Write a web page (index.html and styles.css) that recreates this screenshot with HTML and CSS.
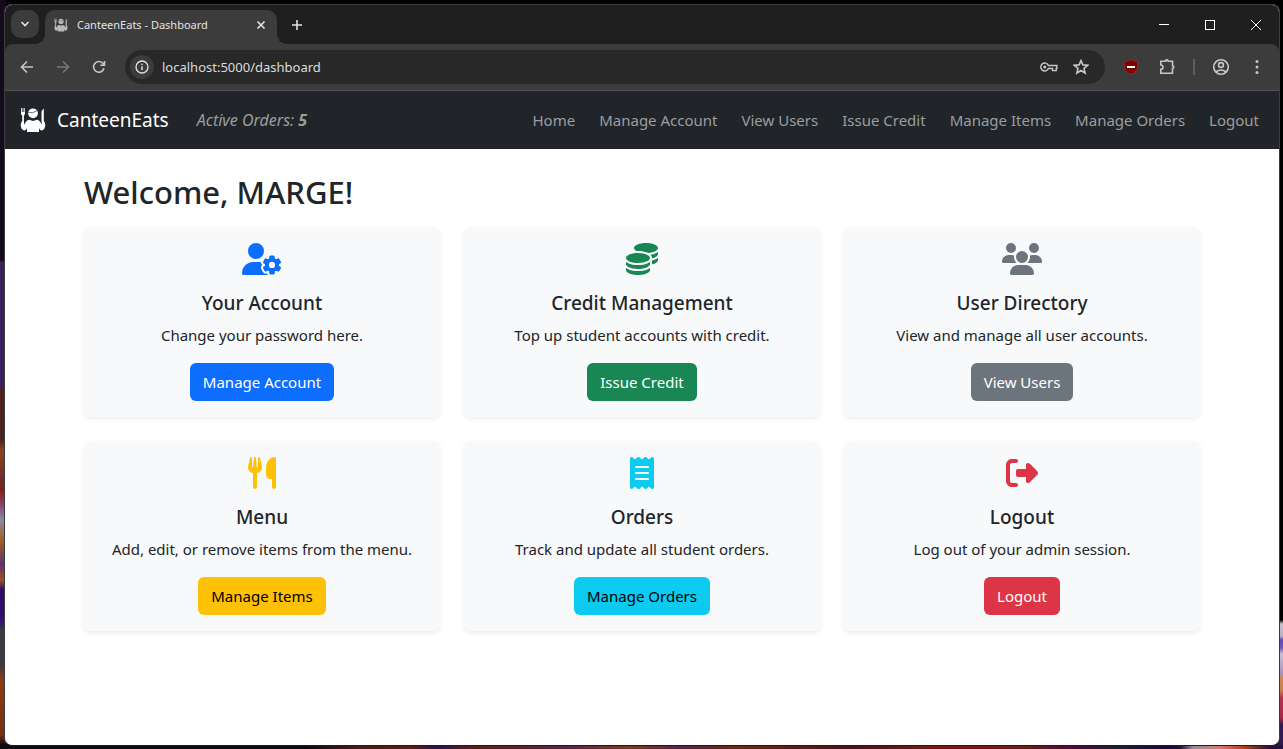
FILE: index.html
```html
<!DOCTYPE html>
<html lang="en">
<head>
<meta charset="utf-8">
<title>CanteenEats - Dashboard</title>
<link rel="stylesheet" href="styles.css">
</head>
<body>
<svg class="defs" width="0" height="0" aria-hidden="true">
  <symbol id="diner" viewBox="0 0 26 26">
    <path d="M1 1v5.500q0 1.500 1.200 1.900V14q-1.400 1.500-1.500 4Q1 22.500 4 23.500q2 0 3-2.200V25h12v-3.700q1 2.200 3 2.200 3-1 3.300-5.500-.1-2.500-1.500-4V1.500Q21.500 3 21.500 6.500V14l.3 4q-1.500-4.500-4.800-5.200l-4 1.200-4-1.200q-3.300.7-4.800 5.200l-.3-4V8.400Q5 8 5 6.500V1h-.7v4h-.9V1h-.8v4h-.8V1z"/>
    <circle cx="13" cy="6.300" r="4.900"/>
    <path d="M8 5.300q5 1.600 9.500-1.800" fill="none" stroke="#555" stroke-width=".8"/>
  </symbol>
</svg>

<div class="window">
  <header class="chrome">
    <div class="tabstrip">
      <button class="tab-search" aria-label="Search tabs"><svg width="10" height="10" viewBox="0 0 10 10"><path class="line thick" d="M1.500 3 5 6.500 8.500 3"/></svg></button>
      <div class="tab">
        <svg class="favicon" width="14" height="14"><use href="#diner"/></svg>
        <span class="tab-title">CanteenEats - Dashboard</span>
        <button class="icon-btn" aria-label="Close tab"><svg width="10" height="10" viewBox="0 0 10 10"><path class="line thick" d="m1.500 1.500 7 7m0-7-7 7"/></svg></button>
      </div>
      <button class="icon-btn new-tab" aria-label="New tab"><svg width="12" height="12" viewBox="0 0 12 12"><path class="line thick" d="M6 1v10M1 6h10"/></svg></button>
      <div class="controls">
        <button class="icon-btn" aria-label="Minimize"><svg width="12" height="12" viewBox="0 0 12 12"><path class="line" d="M1 5.500h10"/></svg></button>
        <button class="icon-btn" aria-label="Maximize"><svg width="12" height="12" viewBox="0 0 12 12"><rect class="line" x="1.500" y="1.500" width="9" height="9"/></svg></button>
        <button class="icon-btn" aria-label="Close"><svg width="12" height="12" viewBox="0 0 12 12"><path class="line" d="m1 1 10 10m0-10L1 11"/></svg></button>
      </div>
    </div>
    <div class="toolbar">
      <button class="icon-btn" aria-label="Back"><svg width="14" height="14" viewBox="0 0 14 14"><path class="line thick" d="M13 7H1.500M7 1.500 1.500 7 7 12.500"/></svg></button>
      <button class="icon-btn off" aria-label="Forward" disabled><svg width="14" height="14" viewBox="0 0 14 14"><path class="line thick" d="M1 7h11.500M7 1.500 12.500 7 7 12.500"/></svg></button>
      <button class="icon-btn" aria-label="Reload"><svg width="14" height="14" viewBox="0 0 14 14"><path class="line thick" d="M12 8.200A5.300 5.300 0 1 1 10.800 3.300L12.300 5M12.500 1v4.300H8.300"/></svg></button>
      <div class="address">
        <button class="site-info" aria-label="Site information"><svg width="14" height="14" viewBox="0 0 14 14"><circle class="line" stroke-width="1.300" cx="7" cy="7" r="6"/><path class="line" stroke-width="1.400" d="M7 6.300V10M7 3.700v1.400"/></svg></button>
        <input type="text" value="localhost:5000/dashboard" aria-label="Address">
        <button class="icon-btn" aria-label="Passwords"><svg width="18" height="12" viewBox="0 0 20 12"><path class="line thick" d="M9.300 4.300A4.400 4.400 0 1 0 9.300 7.700H12.500V7.700H14V10h4V7.700h.8V4.300z"/><circle class="solid" cx="5.300" cy="6" r="1.700"/></svg></button>
        <button class="icon-btn" aria-label="Bookmark"><svg width="16" height="16" viewBox="0 0 16 16"><path class="line thick" d="m8 1.600 1.900 4.300 4.700.4L11 9.400l1.100 4.600L8 11.500 3.900 14 5 9.400 1.400 6.300l4.700-.4z"/></svg></button>
      </div>
      <div class="extensions">
        <button class="icon-btn" aria-label="Ad blocker"><svg width="16" height="16" viewBox="0 0 16 16"><path fill="#800000" stroke="#a33" stroke-width=".6" d="M8 .8Q11 2.300 14.500 2.500V8q0 4.600-6.500 7.300Q1.500 12.600 1.500 8V2.500Q5 2.300 8 .8z"/><path fill="#fff" d="M4 7h8v2H4z"/></svg></button>
        <button class="icon-btn" aria-label="Extensions"><svg width="18" height="18" viewBox="0 0 18 18"><path class="line thick" d="M2.800 3.200H7.500a1.300 1.300 0 0 1 2.600 0h4.400v4.600a1.300 1.300 0 0 1 0 2.600v4.800H2.800v-3.800a2.200 2.200 0 0 0 0-4.400z"/></svg></button>
        <span class="divider"></span>
        <button class="icon-btn" aria-label="Profile"><svg width="18" height="18" viewBox="0 0 18 18"><circle class="line thick" cx="9" cy="9" r="7.300"/><circle class="line thick" cx="9" cy="7" r="2.400"/><path class="line thick" d="M3.800 14q5.200-4 10.400 0"/></svg></button>
        <button class="icon-btn" aria-label="Menu"><svg width="16" height="16" viewBox="0 0 16 16"><g class="solid"><circle cx="8" cy="2.500" r="1.500"/><circle cx="8" cy="8" r="1.500"/><circle cx="8" cy="13.500" r="1.500"/></g></svg></button>
      </div>
    </div>
  </header>

  <nav class="navbar">
    <a class="brand" href="#"><svg width="26" height="26"><use href="#diner"/></svg>CanteenEats</a>
    <em class="active-orders">Active Orders: <strong>5</strong></em>
    <div class="links">
      <a href="#">Home</a>
      <a href="#">Manage Account</a>
      <a href="#">View Users</a>
      <a href="#">Issue Credit</a>
      <a href="#">Manage Items</a>
      <a href="#">Manage Orders</a>
      <a href="#">Logout</a>
    </div>
  </nav>

  <main class="container">
    <h1>Welcome, MARGE!</h1>
    <div class="cards">
      <section class="card primary">
        <svg class="card-icon" viewBox="0 0 640 512"><path d="M224 0a128 128 0 1 1 0 256A128 128 0 1 1 224 0zM178.300 304h91.400c11.800 0 23.400 1.200 34.500 3.300c-2.100 18.500 7.400 35.600 21.800 44.800c-16.600 10.600-26.700 31.600-20 53.300c4 12.900 9.400 25.500 16.400 37.600s15.200 23.100 24.400 33c15.700 16.900 39.600 18.400 57.200 8.700v.9c0 9.200 2.700 18.500 7.900 26.300H29.700C13.300 512 0 498.700 0 482.300C0 383.800 79.800 304 178.300 304zM436 218.200c0-7 4.500-13.300 11.300-14.800c10.500-2.400 21.500-3.700 32.700-3.700s22.200 1.300 32.700 3.700c6.800 1.500 11.300 7.800 11.300 14.800v30.600c7.900 3.400 15.400 7.700 22.300 12.800l24.900-14.300c6.100-3.500 13.700-2.700 18.500 2.400c7.600 8.100 14.300 17.200 20.100 27.200s10.300 20.400 13.500 31c2.100 6.700-1.100 13.700-7.200 17.200l-25 14.400c.4 4 .7 8.100 .7 12.300s-.2 8.200-.7 12.300l25 14.400c6.100 3.500 9.200 10.500 7.200 17.200c-3.300 10.600-7.800 21-13.500 31s-12.500 19.100-20.100 27.200c-4.800 5.100-12.500 5.900-18.500 2.400l-24.900-14.300c-6.900 5.100-14.300 9.400-22.300 12.800l0 30.600c0 7-4.500 13.300-11.300 14.800c-10.500 2.400-21.500 3.700-32.700 3.700s-22.200-1.300-32.700-3.700c-6.800-1.500-11.300-7.800-11.300-14.800V454.800c-8-3.400-15.600-7.700-22.500-12.900l-24.700 14.300c-6.100 3.500-13.700 2.700-18.500-2.400c-7.600-8.100-14.300-17.200-20.100-27.200s-10.300-20.400-13.500-31c-2.100-6.700 1.100-13.700 7.200-17.200l24.800-14.300c-.4-4.100-.7-8.200-.7-12.400s.2-8.300 .7-12.400L343.800 325c-6.100-3.500-9.200-10.500-7.200-17.200c3.300-10.600 7.700-21 13.500-31s12.500-19.100 20.100-27.200c4.800-5.100 12.400-5.900 18.500-2.400l24.800 14.300c6.900-5.100 14.500-9.400 22.500-12.900V218.200zm92.100 133.500a48.100 48.100 0 1 0 -96.100 0 48.100 48.100 0 1 0 96.100 0z"/></svg>
        <h2>Your Account</h2>
        <p>Change your password here.</p>
        <a class="btn" href="#">Manage Account</a>
      </section>
      <section class="card success">
        <svg class="card-icon" viewBox="0 0 512 512"><path d="M512 80c0 18-14.300 34.600-38.400 48c-29.100 16.100-72.500 27.500-122.300 30.900c-3.700-1.800-7.400-3.500-11.300-5C300.600 137.400 248.200 128 192 128c-8.300 0-16.400 .2-24.500 .6l-1.100-.6C142.300 114.600 128 98 128 80c0-44.200 86-80 192-80S512 35.800 512 80zM160.700 161.100c10.200-.7 20.700-1.100 31.300-1.100c62.200 0 117.400 12.300 152.500 31.400C369.300 204.900 384 221.700 384 240c0 4-.7 7.900-2.100 11.700c-4.600 13.200-17 25.300-35 35.500c-.4 .2-.9 .5-1.300 .7c-35 19.400-90.800 32-153.600 32c-59.600 0-112.900-11.300-148.200-29.100c-1.900-.9-3.700-1.900-5.500-2.900C14.300 274.600 0 258 0 240c0-34.800 53.400-64.500 128-75.400c10.500-1.500 21.400-2.700 32.700-3.500zM416 240c0-21.900-10.600-39.900-24.100-53.400c28.300-4.400 54.200-11.400 76.200-20.500c16.300-6.800 31.500-15.200 43.900-25.500V176c0 19.300-16.500 37.100-43.800 50.900c-14.600 7.400-32.400 13.700-52.400 18.500c.1-1.800 .2-3.500 .2-5.300zm-32 96c0 18-14.300 34.600-38.400 48c-1.800 1-3.600 1.900-5.500 2.900C304.900 404.700 251.600 416 192 416c-62.800 0-118.600-12.600-153.600-32C14.300 370.600 0 354 0 336V300.600c12.500 10.300 27.600 18.700 43.900 25.500C83.400 342.600 135.800 352 192 352s108.600-9.400 148.100-25.900c7.800-3.200 15.300-6.900 22.400-10.900c6.100-3.400 11.800-7.200 17.200-11.200c1.500-1.100 2.900-2.300 4.300-3.400V336zm32 0V278.100c19-4.200 36.500-9.500 52.100-16c16.300-6.800 31.500-15.200 43.900-25.500V272c0 10.500-5 21-14.900 30.900c-16.300 16.300-45 29.700-81.300 38.400c.1-1.700 .2-3.500 .2-5.300zM192 448c56.200 0 108.600-9.400 148.100-25.900c16.300-6.800 31.500-15.200 43.900-25.500V432c0 44.200-86 80-192 80S0 476.200 0 432V396.600c12.500 10.300 27.600 18.700 43.900 25.500C83.400 438.600 135.800 448 192 448z"/></svg>
        <h2>Credit Management</h2>
        <p>Top up student accounts with credit.</p>
        <a class="btn" href="#">Issue Credit</a>
      </section>
      <section class="card secondary">
        <svg class="card-icon" viewBox="0 0 640 512"><path d="M144 0a80 80 0 1 1 0 160A80 80 0 1 1 144 0zM512 0a80 80 0 1 1 0 160A80 80 0 1 1 512 0zM0 298.700C0 239.800 47.800 192 106.700 192h42.700c15.900 0 31 3.500 44.600 9.700c-1.300 7.200-1.900 14.700-1.900 22.300c0 38.200 16.800 72.500 43.300 96H21.300C9.600 320 0 310.400 0 298.700zM404.600 320c26.600-23.500 43.300-57.800 43.300-96c0-7.600-.7-15-1.900-22.300c13.600-6.300 28.700-9.700 44.600-9.700h42.700C592.200 192 640 239.800 640 298.700c0 11.800-9.600 21.300-21.300 21.300zM224 224a96 96 0 1 1 192 0 96 96 0 1 1 -192 0zM128 485.300C128 411.700 187.700 352 261.300 352H378.700C452.300 352 512 411.700 512 485.300c0 14.700-11.900 26.700-26.700 26.700H154.700c-14.700 0-26.700-11.900-26.700-26.700z"/></svg>
        <h2>User Directory</h2>
        <p>View and manage all user accounts.</p>
        <a class="btn" href="#">View Users</a>
      </section>
      <section class="card warning">
        <svg class="card-icon" viewBox="0 0 448 512"><path d="M416 0C400 0 288 32 288 176V288c0 35.300 28.700 64 64 64h32V480c0 17.700 14.300 32 32 32s32-14.300 32-32V32c0-17.700-14.300-32-32-32zM64 16C64 7.800 57.900 1 49.700 .1S34.200 4.600 32.400 12.500L2.100 148.800C.7 155.100 0 161.500 0 167.900c0 45.900 35.100 83.600 80 87.700V480c0 17.700 14.300 32 32 32s32-14.300 32-32V255.600c44.900-4.100 80-41.800 80-87.700c0-6.400-.7-12.800-2.100-19.100L191.600 12.500c-1.800-8-9.300-13.300-17.400-12.400S160 7.800 160 16V150.200c0 5.400-4.400 9.800-9.800 9.800c-5.100 0-9.300-3.900-9.800-9L127.900 14.600C127.200 6.300 120.300 0 112 0s-15.200 6.300-15.900 14.600L83.700 151c-.5 5.100-4.700 9-9.800 9c-5.400 0-9.800-4.400-9.800-9.800V16z"/></svg>
        <h2>Menu</h2>
        <p>Add, edit, or remove items from the menu.</p>
        <a class="btn" href="#">Manage Items</a>
      </section>
      <section class="card info">
        <svg class="card-icon" viewBox="0 0 384 512"><path d="M14 2.200C22.500-1.700 32.500-.3 39.600 5.800L80 40.400 120.400 5.800c9-7.700 22.300-7.700 31.200 0L192 40.400 232.400 5.800c9-7.700 22.300-7.700 31.200 0L304 40.400 344.400 5.800c7.100-6.100 17.100-7.500 25.600-3.600s14 12.400 14 21.800V488c0 9.400-5.500 17.900-14 21.800s-18.500 2.500-25.600-3.600L304 471.600l-40.400 34.600c-9 7.700-22.300 7.700-31.200 0L192 471.600l-40.400 34.600c-9 7.700-22.300 7.700-31.200 0L80 471.600 39.600 506.200c-7.100 6.100-17.100 7.500-25.600 3.600S0 497.400 0 488V24C0 14.600 5.500 6.100 14 2.200zM96 144c-8.800 0-16 7.200-16 16s7.200 16 16 16H288c8.800 0 16-7.200 16-16s-7.200-16-16-16H96zM80 352c0 8.800 7.200 16 16 16H288c8.800 0 16-7.200 16-16s-7.200-16-16-16H96c-8.800 0-16 7.200-16 16zM96 240c-8.800 0-16 7.200-16 16s7.200 16 16 16H288c8.800 0 16-7.200 16-16s-7.200-16-16-16H96z"/></svg>
        <h2>Orders</h2>
        <p>Track and update all student orders.</p>
        <a class="btn" href="#">Manage Orders</a>
      </section>
      <section class="card danger">
        <svg class="card-icon" viewBox="0 0 512 512"><path d="M377.900 105.900L500.700 228.700c7.200 7.200 11.300 17.100 11.300 27.300s-4.100 20.100-11.300 27.300L377.900 406.100c-6.400 6.400-15 9.900-24 9.900c-18.700 0-33.900-15.200-33.900-33.900l0-62.100-128 0c-17.700 0-32-14.300-32-32l0-64c0-17.700 14.300-32 32-32l128 0 0-62.100c0-18.700 15.200-33.900 33.900-33.900c9 0 17.600 3.600 24 9.900zM160 96L96 96c-17.700 0-32 14.300-32 32l0 256c0 17.700 14.300 32 32 32l64 0c17.700 0 32 14.300 32 32s-14.300 32-32 32l-64 0c-53 0-96-43-96-96L0 128C0 75 43 32 96 32l64 0c17.700 0 32 14.300 32 32s-14.300 32-32 32z"/></svg>
        <h2>Logout</h2>
        <p>Log out of your admin session.</p>
        <a class="btn" href="#">Logout</a>
      </section>
    </div>
  </main>
</div>
</body>
</html>
```
FILE: styles.css
```css
* { box-sizing: border-box; }

body {
  margin: 0;
  min-height: 100vh;
  padding: 4px 3px 3px 4px;
  display: flex;
  font: 15px/24px "Segoe UI", "Noto Sans", "Open Sans", sans-serif;
  color: #212529;
  background:
    linear-gradient(90deg, #0d0b12 24%, #4a1a16 28%, #5a1c12 32%, #2a1450 34%, #5a2018 37%, #5a2448 44%, #7a3a1c 49%, #5a2448 53%, #6a2a0c 58%, #4a1020 66%, #6a1c10 72%, #6a1c18 80%, #4a0840 84%, #1c2030 87%, #180840 91%, #24103a 92%, #9a8a9a 93%, #d08070 95%, #b04010 97%, #2a1040 99%) bottom / 100% 4px no-repeat,
    linear-gradient(180deg, #130a1b 260px, #3a2058 262px, #3a2060 385px, #502018 392px, #4a2420 440px, #8a4418 450px, #702a30 480px, #802010 490px, #904070 505px, #8a8aa0 520px, #a06020 540px, #603070 565px, #a05020 580px, #300868 590px, #301070 620px, #3a3a40 630px, #3a3a40 665px, #8a3c10 680px, #7a3010 735px, #0d0b12 745px) left / 6px 100% no-repeat,
    linear-gradient(180deg, #000 620px, #c8c0d0 624px, #b8b0c8 636px, #6048b8 640px, #7058b8 648px, #c8c0d8 654px, #a890b8 674px, #d08850 678px, #c88050 690px, #b83050 698px, #a82848 718px, #301850 725px) right / 6px 100% no-repeat,
    #050308;
}

svg { display: block; }
.defs { position: absolute; }
a { color: inherit; text-decoration: none; }
button { border: 0; padding: 0; background: none; color: inherit; font: inherit; }
.line { fill: none; stroke: currentColor; }
.thick { stroke-width: 1.6; }
.solid { fill: currentColor; }

.window {
  flex: 1;
  min-width: 0;
  display: flex;
  flex-direction: column;
  border: 1px solid #3d3d3f;
  border-bottom-color: #1c1c1e;
  border-radius: 8px;
  overflow: hidden;
  background: #fff;
}

.chrome { background: #1f1f1f; color: #e3e3e3; }
.tabstrip { display: flex; height: 39px; padding: 5px 0 0 6px; }
.tab-search {
  width: 28px; height: 28px;
  display: grid; place-items: center;
  border-radius: 10px;
  background: #3c3c3c;
}
.tab {
  position: relative;
  display: flex; align-items: center;
  width: 232px;
  margin-left: 6px;
  padding: 0 7px 5px 9px;
  border-radius: 10px 10px 0 0;
  background: #3c3c3c;
}
.tab::before, .tab::after {
  content: "";
  position: absolute;
  bottom: 0;
  width: 10px; height: 10px;
}
.tab::before { right: 100%; background: radial-gradient(circle at 0 0, transparent 10px, #3c3c3c 10px); }
.tab::after { left: 100%; background: radial-gradient(circle at 100% 0, transparent 10px, #3c3c3c 10px); }
.favicon { fill: #b9b9b9; }
.tab-title { flex: 1; margin-left: 9px; font-size: 11px; line-height: 16px; }
.icon-btn { display: grid; place-items: center; width: 18px; }
.new-tab { width: 40px; padding-bottom: 5px; }
.controls { display: flex; margin-left: auto; padding-bottom: 5px; color: #fff; }
.controls .icon-btn { width: 46px; }

.toolbar {
  display: flex; align-items: center;
  height: 47px;
  padding: 0 13px;
  background: #3c3c3c;
  border-bottom: 1px solid #525354;
  border-radius: 8px 8px 0 0;
  color: #c7c7c7;
}
.toolbar > .icon-btn + .icon-btn { margin-left: 18px; }
.toolbar .off { color: #777; }
.address {
  flex: 1;
  display: flex; align-items: center; gap: 14px;
  height: 34px;
  margin-left: 17px;
  padding: 0 15px 0 5px;
  border-radius: 17px;
  background: #282828;
}
.site-info {
  display: grid; place-items: center;
  width: 24px; height: 24px;
  border-radius: 12px;
  background: #3c3c3c;
  color: #e3e3e3;
}
.address input {
  flex: 1;
  min-width: 0;
  margin-left: -6px;
  padding: 0;
  border: 0;
  background: none;
  color: #dcdcdc;
  font: 13px/20px "Segoe UI", "Noto Sans", "Open Sans", sans-serif;
}
.extensions { display: flex; align-items: center; margin-left: 17px; gap: 18px; }
.divider { width: 2px; height: 16px; margin: 0 -1px; background: #5e5e5e; }

.navbar {
  display: flex; align-items: center;
  min-height: 58px;
  padding: 0 20px 0 15px;
  background: #212529;
  color: #9b9d9f;
}
.brand {
  display: flex; align-items: center; gap: 11px;
  color: #fff;
  fill: #fff;
  font-size: 19px;
}
.active-orders { margin-left: 28px; font-size: 16px; }
.links { display: flex; gap: 24px; margin-left: auto; }

.container {
  width: 100%;
  max-width: 1140px;
  margin: 0 auto;
  padding: 24px 12px;
}
h1 { margin: 0 0 16px; font-size: 31px; line-height: 38px; font-weight: 500; }
.cards { display: grid; grid-template-columns: repeat(3, 1fr); gap: 24px; }
.card {
  display: flex; flex-direction: column; align-items: center;
  padding: 16px;
  border-radius: 6px;
  background: #f8f9fa;
  box-shadow: 0 2px 4px rgba(0, 0, 0, .075);
  text-align: center;
}
.card-icon { height: 32px; margin-bottom: 16px; fill: var(--accent); }
.card h2 { margin: 0 0 8px; font-size: 19px; line-height: 24px; font-weight: 500; }
.card p { margin: 0 0 16px; }
.btn {
  padding: 7px 13px;
  border-radius: 6px;
  background: var(--accent);
  color: var(--ink, #fff);
}
.primary { --accent: #0d6efd; }
.success { --accent: #198754; }
.secondary { --accent: #6c757d; }
.warning { --accent: #ffc107; --ink: #000; }
.info { --accent: #0dcaf0; --ink: #000; }
.danger { --accent: #dc3545; }
```
